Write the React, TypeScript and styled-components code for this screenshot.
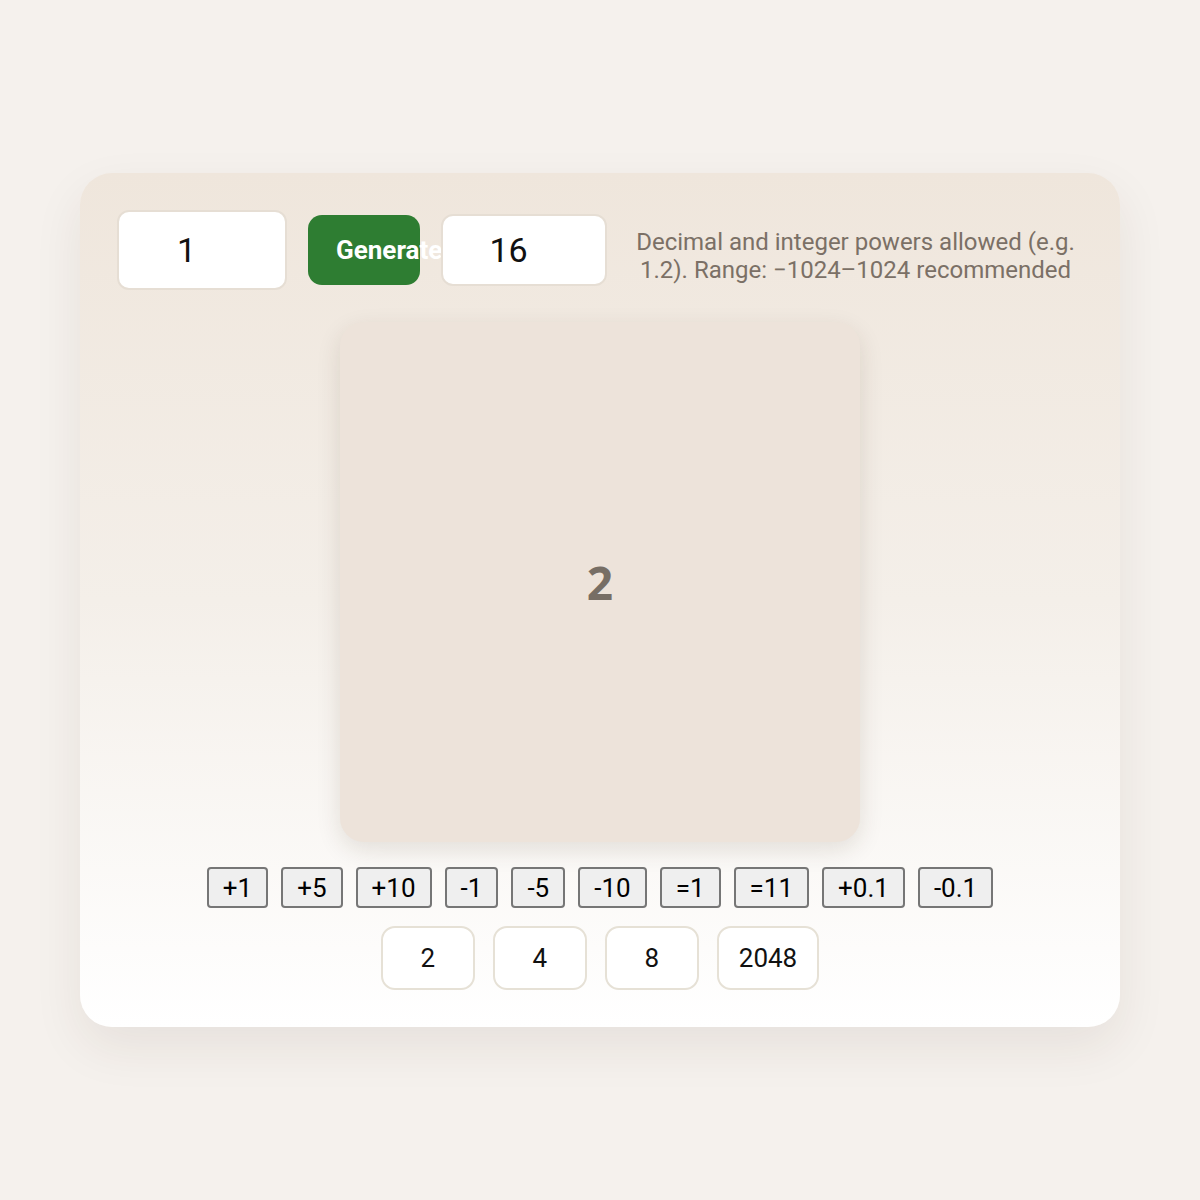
import styled, { createGlobalStyle } from 'styled-components';

const Global = createGlobalStyle`
    body {
        margin: 0;
        background: #f5f1ed;
        font-family: Roboto, "Liberation Sans", sans-serif;
    }
`

const Page = styled.div`
    min-height: 100vh;
    display: flex;
    align-items: center;
    justify-content: center;
`

const Card = styled.div`
    width: 1040px;
    box-sizing: border-box;
    padding: 37px;
    border-radius: 32px;
    background: linear-gradient(180deg, #efe6dc 0%, #f4efe9 50%, #ffffff 100%);
    box-shadow: 0 20px 50px rgba(60, 40, 20, 0.08);
    display: flex;
    flex-direction: column;
    align-items: center;
`

const Header = styled.div`
    width: 100%;
    display: flex;
    align-items: center;
    gap: 21px;
`

const NumInput = styled.input<{ $w: number; $h: number }>`
    width: ${p => p.$w}px;
    height: ${p => p.$h}px;
    box-sizing: border-box;
    border: 2px solid #e6ded4;
    border-radius: 12px;
    background: #fff;
    font-family: Roboto, "Liberation Sans", sans-serif;
    font-size: 34px;
    color: #111;
    text-align: center;
    padding: 0 18px 0 2px;
    outline: none;
    flex-shrink: 0;
`

const GenButton = styled.button`
    width: 112px;
    height: 70px;
    flex-shrink: 0;
    box-sizing: border-box;
    padding: 0 0 0 28px;
    border: none;
    border-radius: 14px;
    background: #2e7d32;
    color: #fff;
    font-family: Roboto, "Liberation Sans", sans-serif;
    font-weight: 700;
    font-size: 26px;
    text-align: left;
    white-space: nowrap;
    overflow: visible;
`

const Help = styled.div`
    flex: 1;
    text-align: center;
    font-size: 24px;
    line-height: 28px;
    color: #7b7066;
    padding-top: 12px;
`

const Tile = styled.div`
    width: 520px;
    height: 520px;
    margin-top: 32px;
    border-radius: 24px;
    background: #ede3da;
    box-shadow: 0 8px 24px rgba(60, 40, 20, 0.12);
    display: flex;
    align-items: center;
    justify-content: center;
    font-family: "Open Sans", Roboto, sans-serif;
    font-weight: 700;
    font-size: 46px;
    color: #776e65;
`

const OpRow = styled.div`
    margin-top: 25px;
    display: flex;
    gap: 13px;
`

const OpButton = styled.button`
    height: 41px;
    box-sizing: border-box;
    padding: 0 14px;
    border: 2px solid #767676;
    border-radius: 4px;
    background: #efefef;
    color: #000;
    font-family: Roboto, "Liberation Sans", sans-serif;
    font-size: 26px;
`

const PresetRow = styled.div`
    margin-top: 18px;
    display: flex;
    gap: 18px;
`

const Preset = styled.button`
    min-width: 94px;
    height: 64px;
    box-sizing: border-box;
    padding: 0 20px;
    border: 2px solid #e6e1d6;
    border-radius: 14px;
    background: #fff;
    color: #111;
    font-family: Roboto, "Liberation Sans", sans-serif;
    font-size: 26px;
`

const ops = ['+1', '+5', '+10', '-1', '-5', '-10', '=1', '=11', '+0.1', '-0.1']
const presets = ['2', '4', '8', '2048']

const App = () => {
    return (
        <Page>
            <Global />
            <Card>
                <Header>
                    <NumInput type="number" $w={170} $h={80} defaultValue={1} />
                    <GenButton>Generate</GenButton>
                    <NumInput type="number" $w={166} $h={72} defaultValue={16} />
                    <Help>Decimal and integer powers allowed (e.g. 1.2). Range: −1024–1024 recommended</Help>
                </Header>
                <Tile>2</Tile>
                <OpRow>
                    {ops.map(o => <OpButton key={o}>{o}</OpButton>)}
                </OpRow>
                <PresetRow>
                    {presets.map(p => <Preset key={p}>{p}</Preset>)}
                </PresetRow>
            </Card>
        </Page>
    )
}

export default App
